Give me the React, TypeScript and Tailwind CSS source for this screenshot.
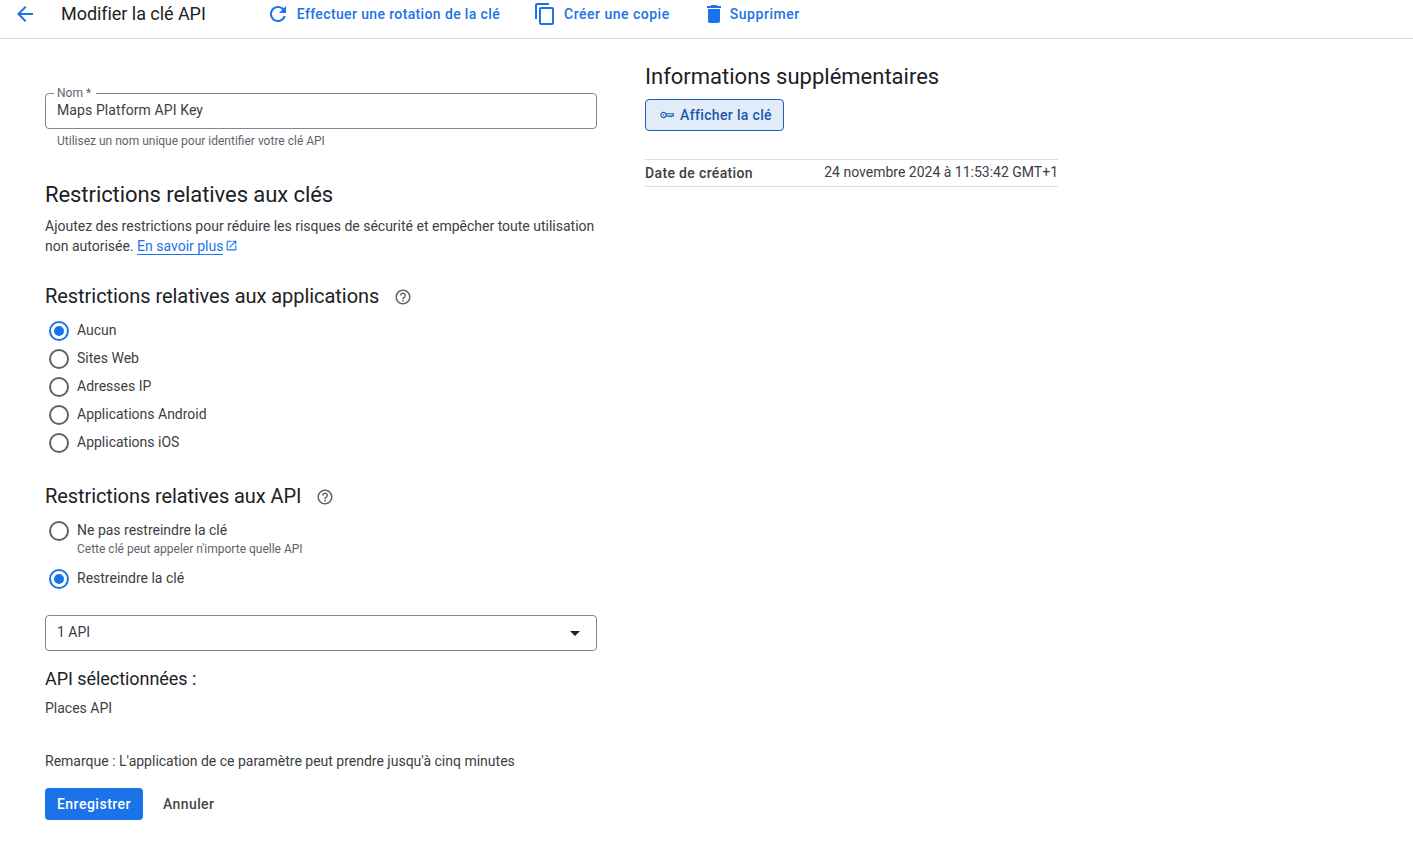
const P = {
  back: "M20 11H7.83l5.59-5.59L12 4l-8 8 8 8 1.41-1.41L7.83 13H20v-2z",
  refresh: "M17.65 6.35C16.2 4.9 14.21 4 12 4c-4.42 0-7.99 3.58-7.99 8s3.57 8 7.99 8c3.73 0 6.84-2.55 7.73-6h-2.08c-.82 2.33-3.04 4-5.65 4-3.31 0-6-2.69-6-6s2.69-6 6-6c1.66 0 3.14.69 4.22 1.78L13 11h7V4l-2.35 2.35z",
  copy: "M16 1H4c-1.1 0-2 .9-2 2v14h2V3h12V1zm3 4H8c-1.1 0-2 .9-2 2v14c0 1.1.9 2 2 2h11c1.1 0 2-.9 2-2V7c0-1.1-.9-2-2-2zm0 16H8V7h11v14z",
  del: "M6 19c0 1.1.9 2 2 2h8c1.1 0 2-.9 2-2V7H6v12zM19 4h-3.5l-1-1h-5l-1 1H5v2h14V4z",
  help: "M11 18h2v-2h-2v2zm1-16C6.48 2 2 6.48 2 12s4.48 10 10 10 10-4.48 10-10S17.52 2 12 2zm0 18c-4.41 0-8-3.59-8-8s3.59-8 8-8 8 3.59 8 8-3.59 8-8 8zm0-14c-2.21 0-4 1.79-4 4h2c0-1.1.9-2 2-2s2 .9 2 2c0 2-3 1.75-3 5h2c0-2.25 3-2.5 3-5 0-2.21-1.79-4-4-4z",
  ext: "M19 19H5V5h7V3H5c-1.11 0-2 .9-2 2v14c0 1.1.89 2 2 2h14c1.1 0 2-.9 2-2v-7h-2v7zM14 3v2h3.59l-9.83 9.83 1.41 1.41L19 6.41V10h2V3h-7z",
};

function Icon({ d, className }: { d: string; className: string }) {
  return (
    <svg viewBox="0 0 24 24" fill="currentColor" className={className}>
      <path d={d} />
    </svg>
  );
}

function Radio({ checked, label, sub }: { checked?: boolean; label: string; sub?: string }) {
  return (
    <div className="flex items-start">
      <span
        className={`ml-1 mt-[1px] flex h-5 w-5 shrink-0 items-center justify-center rounded-full border-2 ${
          checked ? "border-[#1a73e8]" : "border-[#5f6368]"
        }`}
      >
        {checked && <span className="h-[10px] w-[10px] rounded-full bg-[#1a73e8]" />}
      </span>
      <div className="ml-[8px]">
        <div className="text-[14px] leading-[20px] text-[#3c4043]">{label}</div>
        {sub && <div className="text-[12px] leading-[16px] text-[#5f6368] mt-[1px]">{sub}</div>}
      </div>
    </div>
  );
}

function ActionButton({ d, label, iconClass, className, textClass }: { d: string; label: string; iconClass: string; className: string; textClass: string }) {
  return (
    <div className={`flex items-center text-[#1a73e8] ${className}`}>
      <Icon d={d} className={iconClass} />
      <span className={`text-[14px] font-medium leading-[20px] ${textClass}`}>{label}</span>
    </div>
  );
}

export default function App() {
  return (
    <div className="min-h-[846px] bg-white font-['Roboto',sans-serif] text-[#202124]">
      <header className="flex h-[39px] items-start border-b border-[#dadce0] pt-[2px]">
        <Icon d={P.back} className="ml-[13px] h-6 w-6 text-[#1a73e8]" />
        <h1 className="ml-[24px] text-[18px] leading-[24px] tracking-[-0.05px] text-[#202124]">Modifier la clé API</h1>
        <ActionButton d={P.refresh} label="Effectuer une rotation de la clé" iconClass="h-6 w-6 mr-[7px]" className="ml-[60px]" textClass="tracking-[0.37px]" />
        <ActionButton d={P.copy} label="Créer une copie" iconClass="h-6 w-6 mr-[7px]" className="ml-[33px]" textClass="tracking-[0.5px]" />
        <ActionButton d={P.del} label="Supprimer" iconClass="h-6 w-6 mr-[4px]" className="ml-[32px]" textClass="tracking-[0.55px]" />
      </header>

      <main className="flex pl-[45px]">
        <section className="w-[552px]">
          <div className="relative mt-[54px] flex h-[36px] items-center rounded border border-[#80868b] px-[11px] pb-[2px]">
            <span className="absolute -top-[8px] left-[8px] bg-white pl-[3px] pr-[5px] text-[12px] leading-[14px] text-[#5f6368]">Nom *</span>
            <span className="text-[14px] leading-[20px] tracking-[0.1px] text-[#3c4043]">Maps Platform API Key</span>
          </div>
          <p className="ml-[12px] mt-[4px] text-[12px] leading-[16px] text-[#5f6368]">Utilisez un nom unique pour identifier votre clé API</p>

          <h2 className="mt-[32px] text-[22px] leading-[28px] tracking-[-0.07px]">Restrictions relatives aux clés</h2>
          <p className="mt-[7px] text-[14px] leading-[20px] text-[#3c4043]">
            Ajoutez des restrictions pour réduire les risques de sécurité et empêcher toute utilisation non autorisée.{" "}
            <span className="border-b border-[#1a73e8] text-[#1a73e8]">En savoir plus</span>
            <Icon d={P.ext} className="ml-[2px] inline-block h-[13px] w-[13px] align-[-1px] text-[#1a73e8]" />
          </p>

          <div className="mt-[28px] flex items-center">
            <h3 className="-mt-[1px] mb-[1px] text-[20px] leading-[26px] tracking-[-0.05px]">Restrictions relatives aux applications</h3>
            <Icon d={P.help} className="ml-[15px] h-[18px] w-[18px] text-[#5f6368]" />
          </div>
          <div className="mt-[10px] flex flex-col gap-[7px]">
            <Radio checked label="Aucun" />
            <Radio label="Sites Web" />
            <Radio label="Adresses IP" />
            <Radio label="Applications Android" />
            <Radio label="Applications iOS" />
          </div>

          <div className="mt-[31px] flex items-center">
            <h3 className="-mt-[1px] mb-[1px] text-[20px] leading-[26px] tracking-[-0.08px]">Restrictions relatives aux API</h3>
            <Icon d={P.help} className="ml-[15px] h-[18px] w-[18px] text-[#5f6368]" />
          </div>
          <div className="mt-[10px] flex flex-col gap-[11px]">
            <Radio label="Ne pas restreindre la clé" sub="Cette clé peut appeler n'importe quelle API" />
            <Radio checked label="Restreindre la clé" />
          </div>

          <div className="mt-[26px] flex h-[36px] items-center justify-between rounded border border-[#80868b] pl-[11px] pr-[16px]">
            <span className="-mt-[2px] text-[14px] leading-[20px] text-[#3c4043]">1 API</span>
            <span className="h-0 w-0 border-x-[5px] border-t-[5px] border-x-transparent border-t-[#202124]" />
          </div>

          <h4 className="mt-[16px] text-[18px] leading-[24px] tracking-[-0.05px]">API sélectionnées :</h4>
          <p className="mt-[7px] text-[14px] leading-[20px] text-[#3c4043]">Places API</p>
          <p className="mt-[33px] text-[14px] leading-[20px] text-[#3c4043]">Remarque : L'application de ce paramètre peut prendre jusqu'à cinq minutes</p>

          <div className="mt-[17px] flex items-center">
            <div className="flex h-[32px] w-[98px] items-center justify-center rounded bg-[#1a73e8] text-[14px] font-medium tracking-[0.5px] text-white">Enregistrer</div>
            <div className="ml-[20px] text-[14px] font-medium tracking-[0.4px] text-[#444746]">Annuler</div>
          </div>
        </section>

        <aside className="ml-[48px] w-[413px]">
          <h2 className="mt-[24px] text-[22px] leading-[28px]">Informations supplémentaires</h2>
          <div className="mt-[8px] flex h-[32px] w-[139px] items-center rounded border border-[#1a5fc4] bg-[#e2ecf9] pl-[14px] text-[#1a56b0]">
            <svg viewBox="0 0 16 10" className="mr-[6px] h-[10px] w-[14px]" fill="none" stroke="currentColor" strokeWidth="1.2">
              <circle cx="4" cy="5" r="3" />
              <circle cx="4" cy="5" r="0.9" fill="currentColor" stroke="none" />
              <path d="M7 3.6h8.3v2.4h-1.6l-.9 .9-1-.9-1 .9-1-.9H7" />
            </svg>
            <span className="text-[14px] font-medium leading-[20px] tracking-[0.35px]">Afficher la clé</span>
          </div>
          <div className="mt-[28px] flex h-[28px] items-center justify-between border-y border-[#dadce0] text-[14px]">
            <span className="font-medium tracking-[0.35px] text-[#3c4043]">Date de création</span>
            <span className="-mt-[2px] text-[#3c4043]">24 novembre 2024 à 11:53:42 GMT+1</span>
          </div>
        </aside>
      </main>
    </div>
  );
}
